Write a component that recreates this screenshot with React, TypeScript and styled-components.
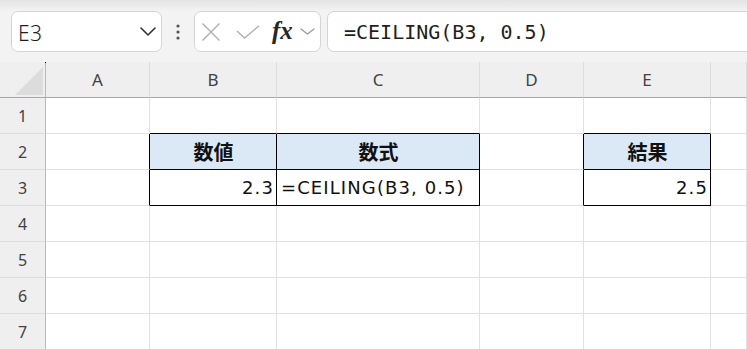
import React from "react";
import styled, { createGlobalStyle } from "styled-components";

const GlobalStyle = createGlobalStyle`
  html, body { margin: 0; padding: 0; background: #ffffff; }
  body { font-family: "Noto Sans", "Noto Sans CJK JP", sans-serif; }
`;

const Page = styled.div`
  width: 747px;
  height: 349px;
  overflow: hidden;
  display: flex;
  flex-direction: column;
  background: #f3f3f3;
`;

const Toolbar = styled.div`
  display: flex;
  align-items: center;
  height: 62px;
  box-sizing: border-box;
  padding: 11px 0 10px 11px;
  background: linear-gradient(#e4e4e4 0px, #ededed 7px, #f3f3f3 11px);
`;

const BoxBase = styled.div`
  height: 41px;
  box-sizing: border-box;
  border: 1px solid #d5d5d5;
  background: #ffffff;
  display: flex;
  align-items: center;
`;

const NameBox = styled(BoxBase)`
  width: 151px;
  border-radius: 7px;
  justify-content: space-between;
  padding: 0 5px 0 6px;
`;

const NameText = styled.span`
  font-family: "Noto Sans", sans-serif;
  font-size: 21px;
  font-weight: 300;
  color: #1e1e1e;
  letter-spacing: 0.5px;
  margin-top: 2px;
`;

const DotsSlot = styled.div`
  width: 32px;
  display: flex;
  justify-content: center;
  align-items: center;
`;

const FxBox = styled(BoxBase)`
  width: 127px;
  border-radius: 7px;
  padding-left: 6px;
`;

const IconSlot = styled.span<{ $w: number; $ml: number }>`
  width: ${(p) => p.$w}px;
  margin-left: ${(p) => p.$ml}px;
  display: flex;
  align-items: center;
  justify-content: center;
`;

const FxLabel = styled.span`
  font-family: "Liberation Serif", "DejaVu Serif", serif;
  font-style: italic;
  font-weight: 700;
  font-size: 25px;
  color: #262626;
  margin-left: 12px;
  line-height: 1;
  margin-top: -3px;
`;

const FormulaBox = styled(BoxBase)`
  flex: 1;
  margin-left: 6px;
  margin-right: -10px;
  border-radius: 7px 0 0 7px;
  padding-left: 16px;
  font-family: "DejaVu Sans Mono", "Liberation Mono", monospace;
  font-size: 20px;
  color: #1f1f1f;
  white-space: nowrap;
`;

const Grid = styled.div`
  display: grid;
  grid-template-columns: 46px 104px 127px 203px 104px 127px 1fr;
  grid-auto-rows: 36px;
  background: #ffffff;
`;

const Corner = styled.div`
  position: relative;
  background: #efefef;
  border-right: 1px solid #b8b8b8;
  border-bottom: 1px solid #a6a6a6;
  display: flex;
  align-items: flex-end;
  justify-content: flex-end;
  padding: 0 2px 2px 0;
  &::after {
    content: "";
    position: absolute;
    right: -1px;
    top: 0;
    width: 1px;
    height: 1px;
    background: #000;
  }
`;

const ColHeader = styled.div`
  background: #efefef;
  border-right: 1px solid #dcdcdc;
  border-bottom: 1px solid #a6a6a6;
  display: flex;
  align-items: center;
  justify-content: center;
  font-family: "Noto Sans", sans-serif;
  font-size: 17px;
  color: #424242;
`;

const RowHeader = styled.div`
  background: #efefef;
  border-right: 1px solid #b8b8b8;
  border-bottom: 1px solid #dcdcdc;
  display: flex;
  align-items: center;
  justify-content: center;
  font-family: "Noto Sans", sans-serif;
  font-size: 16px;
  color: #424242;
`;

const Cell = styled.div<{
  $rightDark: boolean;
  $bottomDark: boolean;
  $head: boolean;
  $align: "left" | "center" | "right";
}>`
  box-sizing: border-box;
  background: ${(p) => (p.$head ? "#dbe9f7" : "#ffffff")};
  border-right: 1px solid ${(p) => (p.$rightDark ? "#000000" : "#e1e1e1")};
  border-bottom: 1px solid ${(p) => (p.$bottomDark ? "#000000" : "#e1e1e1")};
  display: flex;
  align-items: center;
  justify-content: ${(p) =>
    p.$align === "left" ? "flex-start" : p.$align === "right" ? "flex-end" : "center"};
  padding: ${(p) => (p.$head ? "0 3px 1px 4px" : "0 2px 1px 4px")};
  font-family: ${(p) =>
    p.$head
      ? `"Noto Sans CJK JP", "Noto Sans", sans-serif`
      : `"DejaVu Sans", "Noto Sans CJK JP", sans-serif`};
  font-size: ${(p) => (p.$head ? "20px" : "18px")};
  font-weight: ${(p) => (p.$head ? 700 : 400)};
  letter-spacing: ${(p) => (p.$head ? "0" : "1.1px")};
  color: #111111;
  white-space: nowrap;
  overflow: visible;
`;

type CellData = { text: string; head?: boolean; align: "left" | "center" | "right" };

const COLS = ["A", "B", "C", "D", "E", "F"];
const ROWS = [1, 2, 3, 4, 5, 6, 7];

const data: Record<string, CellData> = {
  "B2": { text: "数値", head: true, align: "center" },
  "C2": { text: "数式", head: true, align: "center" },
  "E2": { text: "結果", head: true, align: "center" },
  "B3": { text: "2.3", align: "right" },
  "C3": { text: "=CEILING(B3, 0.5)", align: "left" },
  "E3": { text: "2.5", align: "right" },
};

const inTable = (c: number, r: number) =>
  (r === 2 || r === 3) && (c === 1 || c === 2 || c === 4);

const Chevron = ({ w, h, color, sw }: { w: number; h: number; color: string; sw: number }) => (
  <svg width={w} height={h} viewBox={`0 0 ${w} ${h}`}>
    <polyline
      points={`1,1 ${w / 2},${h - 1} ${w - 1},1`}
      fill="none"
      stroke={color}
      strokeWidth={sw}
      strokeLinecap="round"
      strokeLinejoin="round"
    />
  </svg>
);

export default function App() {
  return (
    <Page>
      <GlobalStyle />
      <Toolbar>
        <NameBox>
          <NameText>E3</NameText>
          <Chevron w={16} h={9} color="#333333" sw={1.6} />
        </NameBox>
        <DotsSlot>
          <svg width="4" height="16" viewBox="0 0 4 16">
            <circle cx="2" cy="2" r="1.6" fill="#555" />
            <circle cx="2" cy="8" r="1.6" fill="#555" />
            <circle cx="2" cy="14" r="1.6" fill="#555" />
          </svg>
        </DotsSlot>
        <FxBox>
          <IconSlot $w={20} $ml={0}>
            <svg width="20" height="20" viewBox="0 0 20 20">
              <path d="M1.5 1.5 L18.5 18.5 M18.5 1.5 L1.5 18.5" stroke="#b0b0b0" strokeWidth="1.4" fill="none" />
            </svg>
          </IconSlot>
          <IconSlot $w={24} $ml={15}>
            <svg width="24" height="14" viewBox="0 0 24 14">
              <path d="M1 6 L8.5 13 L23 0.8" stroke="#b0b0b0" strokeWidth="1.4" fill="none" />
            </svg>
          </IconSlot>
          <FxLabel>fx</FxLabel>
          <IconSlot $w={15} $ml={7}>
            <Chevron w={15} h={7} color="#9a9a9a" sw={1.3} />
          </IconSlot>
        </FxBox>
        <FormulaBox>=CEILING(B3, 0.5)</FormulaBox>
      </Toolbar>
      <Grid>
        <Corner>
          <svg width="28" height="28" viewBox="0 0 28 28">
            <polygon points="28,0 28,28 0,28" fill="#dcdcdc" />
          </svg>
        </Corner>
        {COLS.map((c) => (
          <ColHeader key={c}>{c === "F" ? "" : c}</ColHeader>
        ))}
        {ROWS.map((r) => (
          <React.Fragment key={r}>
            <RowHeader>{r}</RowHeader>
            {COLS.map((c, ci) => {
              const d = data[`${c}${r}`];
              const rightDark = inTable(ci, r) || inTable(ci + 1, r);
              const bottomDark = inTable(ci, r) || inTable(ci, r + 1);
              return (
                <Cell
                  key={c}
                  $rightDark={rightDark}
                  $bottomDark={bottomDark}
                  $head={!!d?.head}
                  $align={d?.align ?? "left"}
                >
                  {d?.text ?? ""}
                </Cell>
              );
            })}
          </React.Fragment>
        ))}
      </Grid>
    </Page>
  );
}
